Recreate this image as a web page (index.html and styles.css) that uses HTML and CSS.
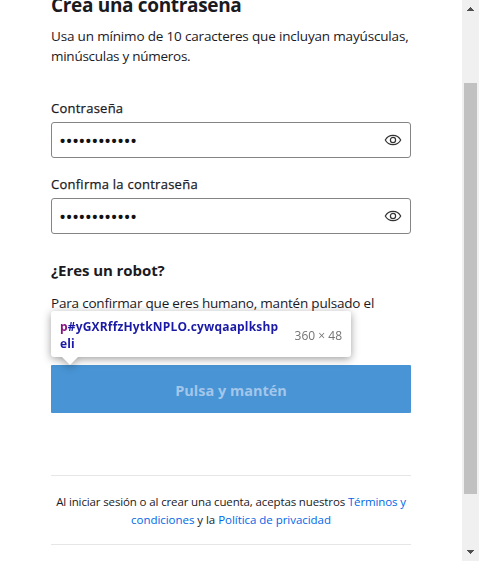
FILE: index.html
```html
<!DOCTYPE html>
<html lang="es">
<head>
<meta charset="utf-8">
<title>Crea una contraseña</title>
<link rel="stylesheet" href="styles.css">
</head>
<body>
<main class="page">
  <form class="form">
    <h1 class="title">Crea una contraseña</h1>
    <p class="intro"><span class="intro-a">Usa un mínimo de 10 caracteres que incluyan mayúsculas,</span><br><span class="intro-b">minúsculas y números.</span></p>
    <div class="field">
      <div class="label">Contraseña</div>
      <div class="input"><span class="dots">••••••••••••</span>
        <svg class="eye" viewBox="0 0 18 12"><path d="M1.3 6C3 2.8 5.7 1.3 9 1.3S15 2.8 16.7 6C15 9.2 12.3 10.7 9 10.7S3 9.2 1.3 6Z"/><circle cx="9" cy="6" r="2.6"/></svg>
      </div>
    </div>
    <div class="field">
      <div class="label">Confirma la contraseña</div>
      <div class="input"><span class="dots">••••••••••••</span>
        <svg class="eye" viewBox="0 0 18 12"><path d="M1.3 6C3 2.8 5.7 1.3 9 1.3S15 2.8 16.7 6C15 9.2 12.3 10.7 9 10.7S3 9.2 1.3 6Z"/><circle cx="9" cy="6" r="2.6"/></svg>
      </div>
    </div>
    <h2 class="robot">¿Eres un robot?</h2>
    <p class="confirm">Para confirmar que eres humano, mantén pulsado el</p>
    <div class="hold"><span>Pulsa y mantén</span>
      <div class="tip">
        <div class="selector"><span class="tag">p</span>#yGXRffzHytkNPLO.cywqaaplkshp<br>eli</div>
        <div class="size">360 × 48</div>
      </div>
    </div>
    <p class="legal"><span class="legal-a">Al iniciar sesión o al crear una cuenta, aceptas nuestros <a>Términos y</a></span><br><span class="legal-b"><a>condiciones</a> y la <a>Política de privacidad</a></span></p>
  </form>
</main>
<div class="scrollbar">
  <svg class="arrow" viewBox="0 0 7 4" shape-rendering="crispEdges"><path d="M3 0h1v1h1v1h1v1h1v1H0V3h1V2h1V1h1z"/></svg>
  <div class="thumb"></div>
  <svg class="arrow" viewBox="0 0 7 4" shape-rendering="crispEdges"><path d="M0 0h7v1H6v1H5v1H4v1H3V3H2V2H1V1H0z"/></svg>
</div>
</body>
</html>
```
FILE: styles.css
```css
* { box-sizing: border-box; }
body {
  margin: 0;
  height: 561px;
  overflow: hidden;
  display: flex;
  background: #fff;
  color: #1a1a1f;
  font-family: "Open Sans", "Noto Sans", sans-serif;
}
h1, h2, p { margin: 0; white-space: nowrap; }
.page { width: 462px; padding-left: 51px; }
.form { width: 360px; }
.title { margin-top: -9px; height: 28px; font-size: 19px; line-height: 28px; font-weight: 700; letter-spacing: -0.33px; }
.intro { margin-top: 7px; font-size: 13.5px; line-height: 20px; }
.intro-a { letter-spacing: -0.17px; }
.intro-b { letter-spacing: -0.27px; }
.intro + .field { margin-top: 32px; }
.label { height: 24px; font-size: 13px; line-height: 20px; font-weight: 500; letter-spacing: 0.25px; white-space: nowrap; -webkit-text-stroke: 0.25px #1a1a1f; }
.input {
  height: 36px;
  margin-bottom: 16px;
  padding: 0 8px 0 7px;
  display: flex;
  align-items: center;
  justify-content: space-between;
  border: 1px solid #858585;
  border-radius: 3px;
}
.dots { padding-top: 2px; font-size: 19px; line-height: 20px; letter-spacing: -0.7px; color: #111; }
.eye { width: 18px; height: 12px; fill: none; stroke: #333; stroke-width: 1.2; }
.robot { margin-top: 25px; font-size: 15px; line-height: 22px; font-weight: 700; letter-spacing: -0.07px; }
.confirm { margin-top: 12px; height: 72px; font-size: 13.5px; line-height: 20px; letter-spacing: -0.2px; }
.hold {
  position: relative;
  height: 48px;
  border-radius: 1px;
  background: #4894d4;
  color: #a3c6eb;
  display: flex;
  align-items: center;
  justify-content: center;
  padding-top: 2px;
  font-size: 14.5px;
  font-weight: 700;
}
.tip {
  position: absolute;
  left: 0;
  top: -54px;
  width: 300px;
  height: 46px;
  padding: 0 9px;
  display: flex;
  align-items: center;
  justify-content: space-between;
  border-radius: 3px;
  background: #fff;
  filter: drop-shadow(0 2px 4px rgba(0,0,0,.38));
  white-space: nowrap;
}
.tip::after {
  content: "";
  position: absolute;
  left: 11px;
  top: 46px;
  border: 8px solid transparent;
  border-bottom: 0;
  border-top-color: #fff;
}
.selector { padding-top: 1px; color: #1a1aa6; font-size: 12px; line-height: 17px; font-weight: 700; letter-spacing: 0.17px; }
.tag { color: #881280; }
.size { color: #737373; font-size: 12px; font-weight: 400; padding-top: 2px; }
.legal {
  margin-top: 62px;
  height: 70px;
  padding-top: 17px;
  border-top: 1px solid #e6e6e6;
  border-bottom: 1px solid #e6e6e6;
  text-align: center;
  font-size: 11.5px;
  line-height: 18px;
}
.legal-a { letter-spacing: -0.13px; }
.legal-b { letter-spacing: -0.04px; }
.legal a { color: #0067e6; }
.scrollbar {
  width: 17px;
  height: 561px;
  display: flex;
  flex-direction: column;
  align-items: center;
  justify-content: space-between;
  padding: 7px 0;
  background: #f0f0f0;
}
.arrow { width: 7px; height: 4px; fill: #505050; }
.thumb { width: 13px; height: 411px; background: #c1c1c1; margin-top: 16px; }
```
